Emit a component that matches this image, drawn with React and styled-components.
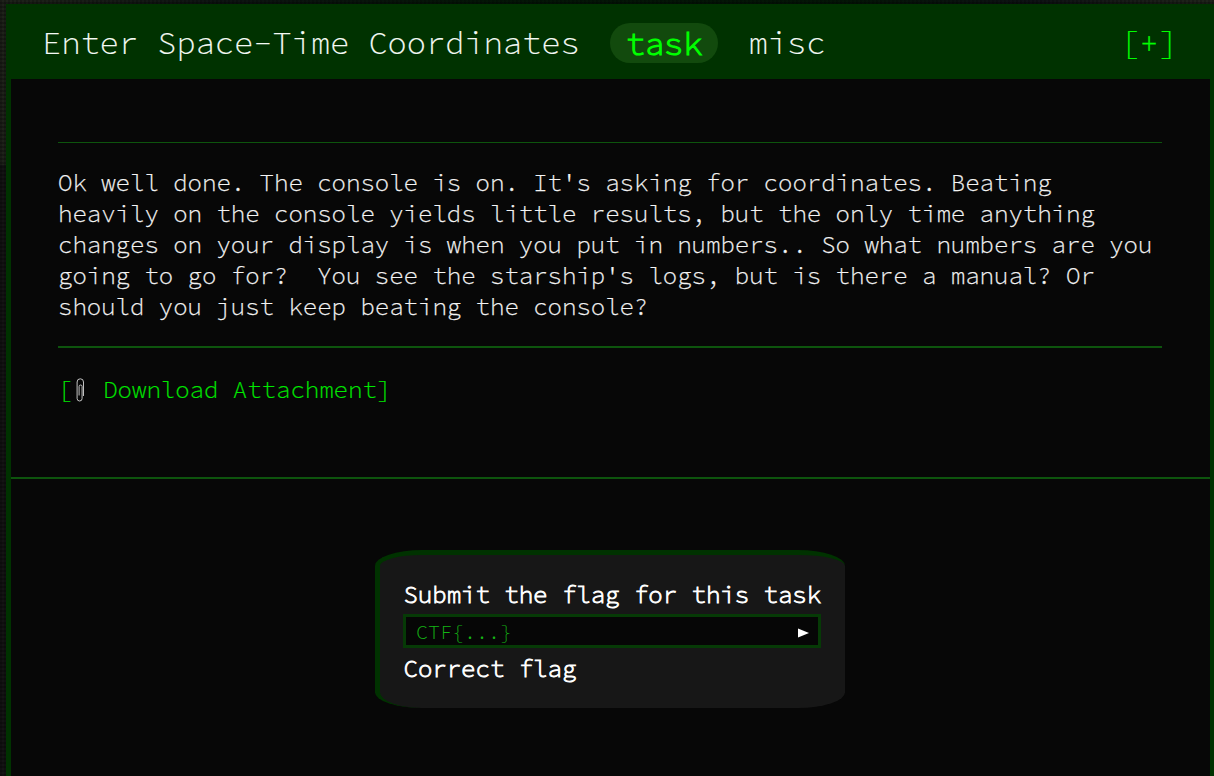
import React from 'react';
import styled, { createGlobalStyle } from 'styled-components';

const Global = createGlobalStyle`
  *, *::before, *::after { box-sizing: border-box; }
  html, body { margin: 0; height: 100%; overflow: hidden; }
  body {
    color: #fff;
    font-family: 'Source Code Pro', 'Noto Sans Mono CJK SC', 'Liberation Mono', monospace;
    background-color: #141414;
    background-image:
      repeating-linear-gradient(0deg, rgba(0, 0, 0, 0.25) 0 2px, transparent 2px 4px),
      repeating-linear-gradient(90deg, rgba(0, 0, 0, 0.2) 0 2px, transparent 2px 4px),
      linear-gradient(90deg, rgba(32, 36, 27, 0.9), rgba(13, 20, 18, 0.9) 18%, rgba(2, 22, 5, 0.9) 40%, rgba(2, 22, 5, 0.9) 70%, rgba(13, 18, 20, 0.9) 85%, rgba(34, 38, 28, 0.9));
    background-size: auto, auto, 100% 165px;
    background-repeat: repeat, repeat, no-repeat;
  }
`;

const Page = styled.div`
  height: 776px;
  padding: 4px 0 0 6px;
`;

const Panel = styled.main`
  height: 772px;
  display: flex;
  flex-direction: column;
  background: #070707;
  border: solid #003200;
  border-width: 0 4px 0 5px;
`;

const Header = styled.header`
  height: 75px;
  flex: none;
  margin: 0 -4px 0 -5px;
  padding: 2px 36px 0 36px;
  display: flex;
  align-items: center;
  background: #003200;
  font-size: 32px;
  font-weight: 300;
  line-height: 40px;
  white-space: pre;
`;

const Title = styled.h1`
  margin: 0;
  font: inherit;
  color: #f5faf5;
  -webkit-text-stroke: 0.15px #f5faf5;
`;

const Tag = styled.span`
  height: 40px;
  margin: 1px 0 0 30px;
  padding: 0 15.1px 0 16.1px;
  border-radius: 20px;
  background: #124a0d;
  color: #0f0;
  line-height: 42px;
  -webkit-text-stroke: 1.2px #0f0;
`;

const Category = styled.span`
  margin-left: 31px;
  color: #f5faf5;
  -webkit-text-stroke: 0.15px #f5faf5;
`;

const Toggle = styled.button`
  margin-left: auto;
  padding: 0;
  border: 0;
  background: none;
  color: #0f0;
  font: inherit;
  -webkit-text-stroke: 0.2px #0f0;
`;

const Details = styled.section`
  height: 400px;
  flex: none;
  padding: 63px 48px 0 47px;
  border-bottom: 2px solid #0d540d;
`;

const Description = styled.p`
  height: 206px;
  margin: 0;
  padding: 24px 0 0;
  border-top: 1px solid #0d540d;
  border-bottom: 2px solid #0d540d;
  color: #f4f4f4;
  font-size: 24px;
  font-weight: 300;
  line-height: 31px;
  white-space: pre;
  -webkit-text-stroke: 0.25px #f4f4f4;
`;

const Attachment = styled.a`
  display: flex;
  align-items: center;
  margin-top: 26px;
  color: #00ea00;
  font-size: 24px;
  font-weight: 300;
  line-height: 32px;
  white-space: pre;
  -webkit-text-stroke: 0.2px #00ea00;
`;

const Clip = styled.svg`
  width: 14.4px;
  height: 26px;
  margin-right: 2px;
`;

const Submission = styled.section`
  flex: 1;
  padding-top: 71px;
`;

const FlagForm = styled.form`
  width: 470px;
  height: 158px;
  margin: 0 auto 0 364px;
  padding: 24px 24px 0 23px;
  display: flex;
  flex-direction: column;
  border: solid #003200;
  border-width: 5px 0 0 5px;
  border-radius: 10%;
  background: #171717;
`;

const Label = styled.label`
  height: 35px;
  padding-left: 0.5px;
  font-size: 24px;
  font-weight: 300;
  line-height: 31px;
  white-space: pre;
  -webkit-text-stroke: 0.9px #fff;
`;

const Field = styled.div`
  height: 34px;
  display: flex;
  align-items: center;
  padding: 0 9px 0 10px;
  border: 3px solid #063a06;
  background: #060606;
`;

const Input = styled.input`
  flex: 1;
  min-width: 0;
  height: 28px;
  padding: 0;
  border: 0;
  outline: 0;
  background: none;
  color: #14ac14;
  font: 300 20px 'Source Code Pro', 'Noto Sans Mono CJK SC', 'Liberation Mono', monospace;
  &::placeholder { color: #14b414; opacity: 1; }
`;

const Send = styled.button`
  display: flex;
  padding: 3px 0 0;
  border: 0;
  background: none;
`;

const Status = styled.div`
  margin-top: 5px;
  padding-left: 0.5px;
  font-size: 24px;
  font-weight: 300;
  line-height: 31px;
  white-space: pre;
  -webkit-text-stroke: 0.9px #fff;
`;

const description = `Ok well done. The console is on. It's asking for coordinates. Beating
heavily on the console yields little results, but the only time anything
changes on your display is when you put in numbers.. So what numbers are you
going to go for?  You see the starship's logs, but is there a manual? Or
should you just keep beating the console?`;

export default function App() {
  return (
    <>
      <Global />
      <Page>
        <Panel>
          <Header>
            <Title>Enter Space-Time Coordinates</Title>
            <Tag>task</Tag>
            <Category>misc</Category>
            <Toggle>[+]</Toggle>
          </Header>
          <Details>
            <Description>{description}</Description>
            <Attachment>
              [
              <Clip viewBox="0 0 14.4 26" fill="none" stroke="#c4c4c4" strokeWidth="1">
                <path d="M11.500 19V5a3.200 3.200 0 0 0-6.400 0V21.500a2.500 2.500 0 0 0 5 0V9.500a1.500 1.500 0 0 0-3 0V18.500" />
              </Clip>
              {' Download Attachment]'}
            </Attachment>
          </Details>
          <Submission>
            <FlagForm onSubmit={(e) => e.preventDefault()}>
              <Label htmlFor="flag">Submit the flag for this task</Label>
              <Field>
                <Input id="flag" placeholder="CTF{...}" />
                <Send aria-label="Submit">
                  <svg width="11" height="10" viewBox="0 0 11 10"><path d="M0 0.500L11 5L0 9.500Z" fill="#fff" /></svg>
                </Send>
              </Field>
              <Status>Correct flag</Status>
            </FlagForm>
          </Submission>
        </Panel>
      </Page>
    </>
  );
}
